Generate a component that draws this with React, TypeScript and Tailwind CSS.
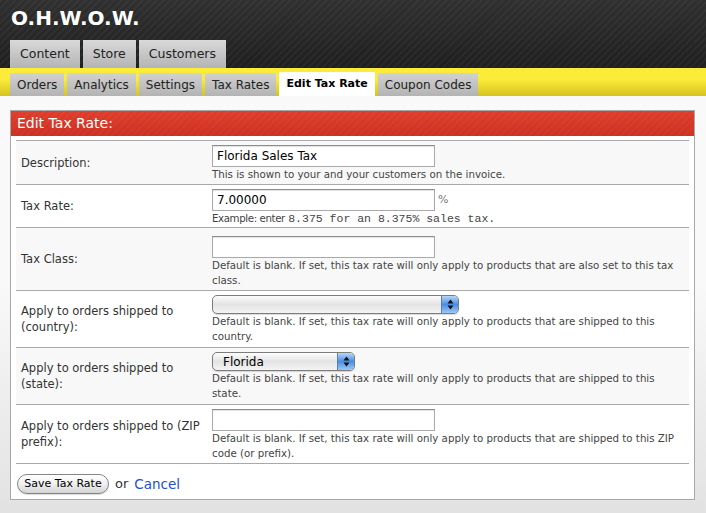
import React from "react";

const topTabs = ["Content", "Store", "Customers"];
const subTabs = ["Orders", "Analytics", "Settings", "Tax Rates", "Edit Tax Rate", "Coupon Codes"];

function TextInput({ value = "" }: { value?: string }) {
  return (
    <div className="w-[223px] h-[22px] border border-[#a9a9a9] border-t-[#8c8c8c] bg-white shadow-[inset_0_1px_1px_rgba(0,0,0,0.12)] px-[4px] flex items-center text-[12px] text-black">
      {value}
    </div>
  );
}

function AquaSelect({ width, value = "" }: { width: string; value?: string }) {
  return (
    <div
      className={`${width} h-[19px] rounded-[5px] border border-[#7c7c7c] bg-gradient-to-b from-[#fdfdfd] via-[#e3e3e3] to-[#f4f4f4] flex items-center overflow-hidden shadow-[0_1px_1px_rgba(0,0,0,0.15)]`}
    >
      <span className="flex-1 pl-[10px] text-[12px] text-black leading-none">{value}</span>
      <span className="w-[17px] h-full bg-gradient-to-b from-[#b6d6f8] via-[#4a8de3] to-[#9cc8f4] border-l border-[#5a80b3] flex items-center justify-center">
        <svg width="7" height="11" viewBox="0 0 7 11">
          <path d="M3.5 0.5 L6.5 4.5 L0.5 4.5 Z" fill="#111" />
          <path d="M3.5 10.5 L6.5 6.5 L0.5 6.5 Z" fill="#111" />
        </svg>
      </span>
    </div>
  );
}

function Row({
  label,
  odd,
  children,
  pt = "pt-[4px]",
  pb = "pb-[2px]",
}: {
  label: React.ReactNode;
  odd?: boolean;
  children: React.ReactNode;
  pt?: string;
  pb?: string;
}) {
  return (
    <div className={`grid grid-cols-[196px_1fr] border-t border-[#a9a9a9] ${odd ? "bg-[#f8f8f8]" : "bg-white"}`}>
      <div className="px-[5px] flex items-center text-[11.5px] leading-[16px] text-[#333]">{label}</div>
      <div className={`pr-[5px] ${pt} ${pb}`}>{children}</div>
    </div>
  );
}

function Help({ children }: { children: React.ReactNode }) {
  return <p className="text-[10.25px] leading-[15px] text-[#444]">{children}</p>;
}

export default function App() {
  return (
    <div className="min-h-[513px] w-full bg-gradient-to-b from-[#f9f9f9] from-55% to-[#e2e2e2] font-['Lucida_Grande','DejaVu_Sans',sans-serif]">
      {/* top bar */}
      <header className="h-[68px] flex flex-col justify-between bg-[image:repeating-linear-gradient(135deg,rgba(255,255,255,0.035)_0px,rgba(255,255,255,0.035)_2px,transparent_2px,transparent_5px),linear-gradient(#303030,#1f1f1f)]">
        <h1 className="pl-[11px] pt-[6px] text-[20px] leading-[24px] font-bold text-white">O.H.W.O.W.</h1>
        <nav className="flex gap-[3px] pl-[10px]">
          {topTabs.map((t) => (
            <div
              key={t}
              className="h-[28px] px-[10px] flex items-center text-[12.5px] text-[#222] bg-gradient-to-b from-[#d9d9d9] to-[#b4b4b4]"
            >
              {t}
            </div>
          ))}
        </nav>
      </header>

      {/* yellow sub nav */}
      <div className="h-[28px] flex items-end gap-[3px] pl-[10px] bg-gradient-to-b from-[#fcec3a] from-40% to-[#d6c31f]">
        {subTabs.map((t) =>
          t === "Edit Tax Rate" ? (
            <div key={t} className="h-[24px] px-[7px] flex items-center text-[11px] font-bold text-black bg-white">
              {t}
            </div>
          ) : (
            <div
              key={t}
              className="h-[23px] px-[7px] flex items-center text-[12px] text-[#222] bg-gradient-to-b from-[#d2d2d2] to-[#b3b3b3]"
            >
              {t}
            </div>
          )
        )}
      </div>

      <main className="pl-[10px] pr-[11px] pt-[14px] pb-[13px]">
        <div className="border border-[#a8a8a8] bg-white">
          <div className="h-[25px] pl-[6px] flex items-center text-[14px] text-white bg-[image:repeating-linear-gradient(135deg,rgba(0,0,0,0.045)_0px,rgba(0,0,0,0.045)_2px,transparent_2px,transparent_5px),linear-gradient(#e4412f,#cf3424)]">
            Edit Tax Rate:
          </div>

          <div className="px-[5px] pt-[4px]">
            <Row label="Description:" odd>
              <TextInput value="Florida Sales Tax" />
              <Help>This is shown to your and your customers on the invoice.</Help>
            </Row>

            <Row label="Tax Rate:" pb="pb-[1px]">
              <div className="flex items-center gap-[3px]">
                <TextInput value="7.00000" />
                <span className="text-[11px] text-[#777]">%</span>
              </div>
              <p className="text-[10.25px] leading-[15px] text-[#444]">
                <span className="tracking-[-0.4px]">Example: enter</span>{" "}
                <span className="font-['Liberation_Mono',monospace] text-[11.5px]">8.375 for an 8.375% sales tax.</span>
              </p>
            </Row>

            <Row label="Tax Class:" odd pt="pt-[8px]">
              <TextInput />
              <Help>
                Default is blank. If set, this tax rate will only apply to products that are also set to this tax
                class.
              </Help>
            </Row>

            <Row label="Apply to orders shipped to (country):" pb="pb-[3px]">
              <AquaSelect width="w-[247px]" />
              <Help>
                Default is blank. If set, this tax rate will only apply to products that are shipped to this
                country.
              </Help>
            </Row>

            <Row label="Apply to orders shipped to (state):" odd pb="pb-[3px]">
              <AquaSelect width="w-[143px]" value="Florida" />
              <Help>
                Default is blank. If set, this tax rate will only apply to products that are shipped to this
                state.
              </Help>
            </Row>

            <Row label="Apply to orders shipped to (ZIP prefix):">
              <TextInput />
              <Help>
                Default is blank. If set, this tax rate will only apply to products that are shipped to this ZIP
                code (or prefix).
              </Help>
            </Row>

            <div className="border-t border-[#a9a9a9] pt-[10px] pb-[5px] pl-[1px] flex items-center gap-[6px]">
              <button className="h-[20px] w-[92px] rounded-full border border-[#858585] bg-gradient-to-b from-white via-[#f0f0f0] to-[#d4d4d4] text-[11px] text-black shadow-[0_1px_1px_rgba(0,0,0,0.15)]">
                Save Tax Rate
              </button>
              <span className="text-[13px] text-[#333]">or</span>
              <a className="text-[13.5px] text-[#1c4fcf]">Cancel</a>
            </div>
          </div>
        </div>
      </main>
    </div>
  );
}
